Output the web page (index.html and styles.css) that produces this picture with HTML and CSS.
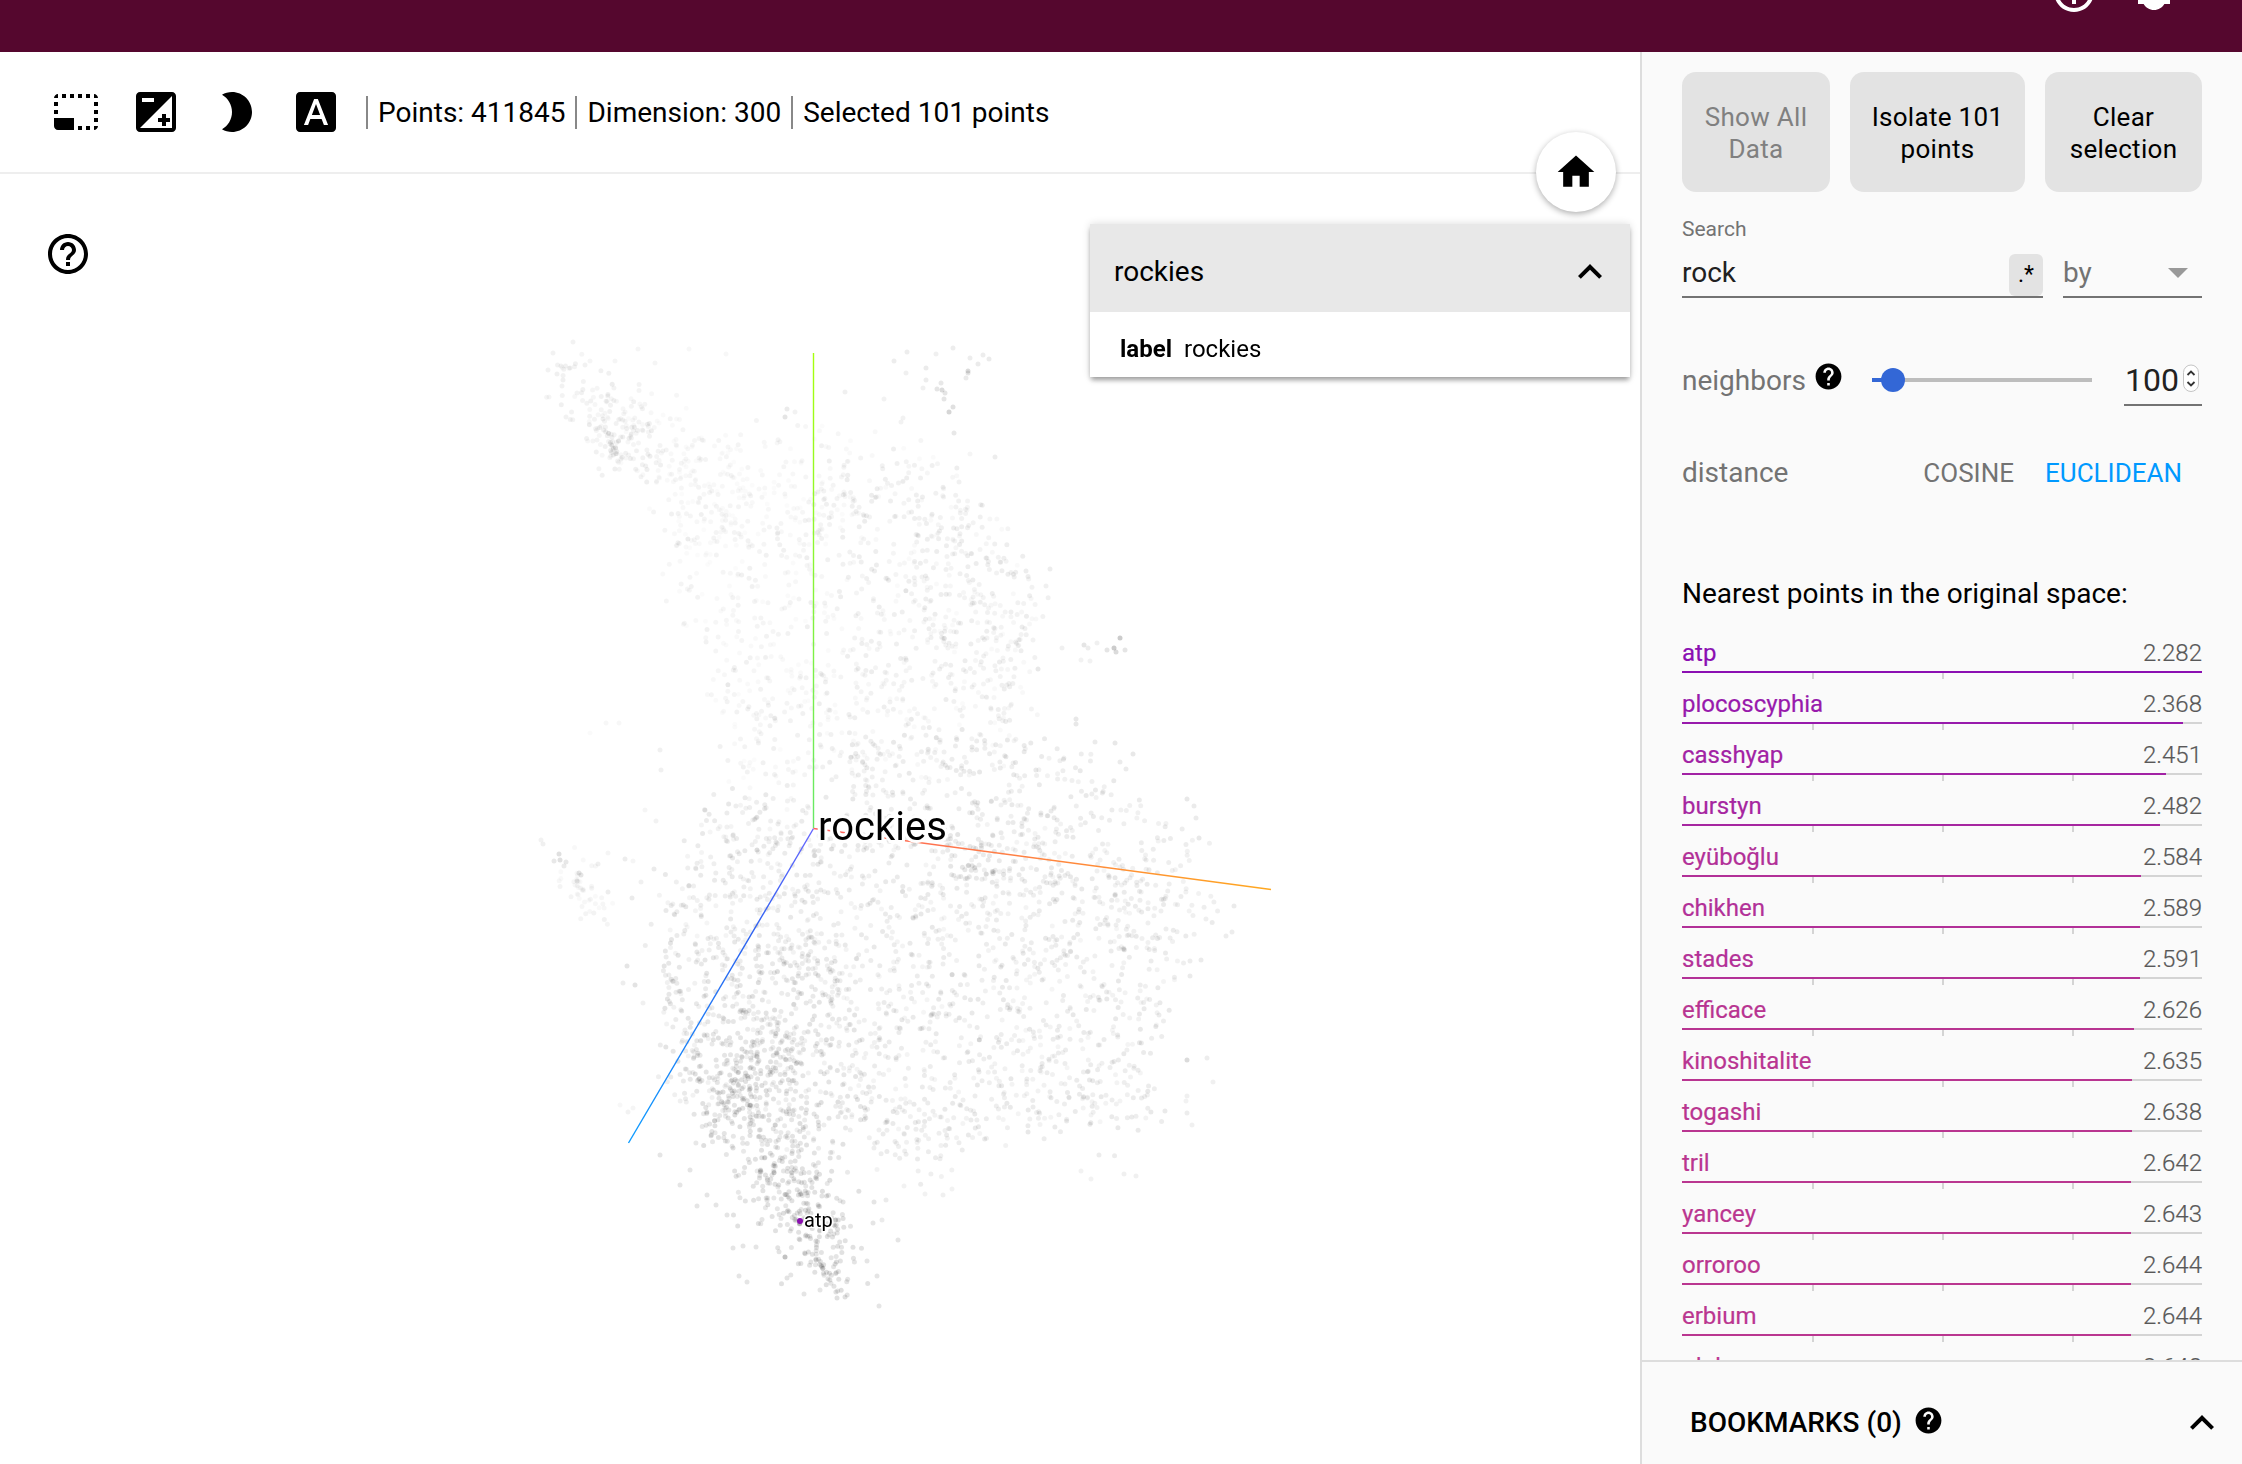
FILE: index.html
```html
<!DOCTYPE html>
<html lang="en">
<head>
<meta charset="utf-8">
<title>Embedding Projector</title>
<link rel="stylesheet" href="styles.css">
</head>
<body>
<svg class="defs" aria-hidden="true">
  <symbol id="help-outline" viewBox="0 0 24 24"><path d="M11 18h2v-2h-2v2zm1-16C6.48 2 2 6.48 2 12s4.48 10 10 10 10-4.48 10-10S17.52 2 12 2zm0 18c-4.41 0-8-3.59-8-8s3.59-8 8-8 8 3.59 8 8-3.59 8-8 8zm0-14c-2.21 0-4 1.79-4 4h2c0-1.1.9-2 2-2s2 .9 2 2c0 2-3 1.75-3 5h2c0-2.25 3-2.5 3-5 0-2.21-1.79-4-4-4z"/></symbol>
  <symbol id="help" viewBox="0 0 24 24"><path d="M12 2C6.48 2 2 6.48 2 12s4.48 10 10 10 10-4.48 10-10S17.52 2 12 2zm1 17h-2v-2h2v2zm2.07-7.75l-.9.92C13.45 12.9 13 13.5 13 15h-2v-.5c0-1.1.45-2.1 1.17-2.83l1.24-1.26c.37-.36.59-.86.59-1.41 0-1.1-.9-2-2-2s-2 .9-2 2H8c0-2.21 1.79-4 4-4s4 1.79 4 4c0 .88-.36 1.68-.93 2.25z"/></symbol>
  <symbol id="bug" viewBox="0 0 24 24"><path d="M20 8h-2.81c-.45-.78-1.07-1.45-1.82-1.96L17 4.41 15.59 3l-2.17 2.17C12.96 5.06 12.49 5 12 5s-.96.06-1.41.17L8.41 3 7 4.41l1.62 1.63C7.88 6.55 7.26 7.22 6.81 8H4v2h2.09c-.05.33-.09.66-.09 1v1H4v2h2v1c0 .34.04.67.09 1H4v2h2.81c1.04 1.79 2.97 3 5.19 3s4.15-1.21 5.19-3H20v-2h-2.09c.05-.33.09-.66.09-1v-1h2v-2h-2v-1c0-.34-.04-.67-.09-1H20V8zm-6 8h-4v-2h4v2zm0-4h-4v-2h4v2z"/></symbol>
  <symbol id="chevron" viewBox="0 0 24 24"><path d="M12 8l-6 6 1.41 1.41L12 10.83l4.59 4.58L18 14z"/></symbol>
</svg>

<header class="app-bar">
  <svg class="icon"><use href="#help-outline"/></svg>
  <svg class="icon"><use href="#bug"/></svg>
</header>

<div class="content">
  <main class="stage">
    <div class="toolbar">
      <svg class="icon" viewBox="0 0 24 24"><path d="M23 15h-2v2h2v-2zm0-4h-2v2h2v-2zm0 8h-2v2c1 0 2-1 2-2zM15 3h-2v2h2V3zm8 4h-2v2h2V7zm-2-4v2h2c0-1-1-2-2-2zM3 21h8v-6H1v4c0 1.100.9 2 2 2zM3 7H1v2h2V7zm12 12h-2v2h2v-2zm4-16h-2v2h2V3zm0 16h-2v2h2v-2zM3 3C2 3 1 4 1 5h2V3zm0 8H1v2h2v-2zm8-8H9v2h2V3zM7 3H5v2h2V3z"/></svg>
      <svg class="icon" viewBox="0 0 24 24"><path d="M15 17v2h2v-2h2v-2h-2v-2h-2v2h-2v2h2zm5-15H4c-1.100 0-2 .9-2 2v16c0 1.100.9 2 2 2h16c1.100 0 2-.9 2-2V4c0-1.100-.9-2-2-2zM5 5h6v2H5V5zm15 15H4L20 4v16z"/></svg>
      <svg class="icon" viewBox="0 0 24 24"><path d="M10 2c-1.820 0-3.530.5-5 1.350C7.990 5.080 10 8.300 10 12s-2.010 6.920-5 8.650C6.470 21.500 8.180 22 10 22c5.520 0 10-4.480 10-10S15.520 2 10 2z"/></svg>
      <svg class="icon" viewBox="0 0 24 24"><path d="M9.930 13.500h4.140L12 7.980zM20 2H4c-1.100 0-2 .9-2 2v16c0 1.100.9 2 2 2h16c1.100 0 2-.9 2-2V4c0-1.100-.9-2-2-2zm-4.050 16.500l-1.140-3H9.170l-1.120 3H5.960l5.110-13h1.860l5.110 13h-2.090z"/></svg>
      <div class="stats">
        <span class="stat">Points: 411845</span>
        <span class="stat">Dimension: 300</span>
        <span class="stat">Selected 101 points</span>
      </div>
    </div>
    <div class="scatter">
      <canvas class="cloud" id="cloud" width="1640" height="1290"></canvas>
      <svg class="axes" viewBox="0 174 1640 1290">
        <defs>
          <linearGradient id="gy" gradientUnits="userSpaceOnUse" x1="0" y1="353" x2="0" y2="829"><stop offset="0" stop-color="#a6ff0d"/><stop offset="1" stop-color="#66e866"/></linearGradient>
          <linearGradient id="gz" gradientUnits="userSpaceOnUse" x1="813" y1="829" x2="628" y2="1143"><stop offset="0" stop-color="#6666ff"/><stop offset=".35" stop-color="#2b62f0"/><stop offset="1" stop-color="#0c9cff"/></linearGradient>
          <linearGradient id="gx" gradientUnits="userSpaceOnUse" x1="813" y1="0" x2="1271" y2="0"><stop offset="0" stop-color="#ff6060"/><stop offset="1" stop-color="#ffa81f"/></linearGradient>
        </defs>
        <path d="M813.500 353V828" stroke="url(#gy)"/>
        <path d="M813.500 828.500L628.500 1143" stroke="url(#gz)"/>
        <path d="M813.500 828.500L1271 889.500" stroke="url(#gx)"/>
        <circle cx="800" cy="1221" r="3" fill="#8a0fb0"/>
        <text class="point-label point-label-main" x="818" y="839.500">rockies</text>
        <text class="point-label" x="804" y="1227">atp</text>
      </svg>
      <svg class="icon help-button"><use href="#help-outline"/></svg>
      <div class="home-button"><svg viewBox="0 0 24 24"><path d="M10 20v-6h4v6h5v-8h3L12 3 2 12h3v8z"/></svg></div>
      <section class="metadata">
        <div class="metadata-head"><span>rockies</span><svg class="icon"><use href="#chevron"/></svg></div>
        <div class="metadata-row"><b>label</b><span>rockies</span></div>
      </section>
    </div>
  </main>

  <aside class="inspector">
    <div class="panel">
      <div class="buttons">
        <button class="btn btn-show" disabled>Show All<br>Data</button>
        <button class="btn btn-isolate">Isolate 101<br>points</button>
        <button class="btn btn-clear">Clear<br>selection</button>
      </div>
      <div class="search-label">Search</div>
      <div class="search">
        <div class="field field-query"><span>rock</span><span class="regex">.*</span></div>
        <div class="field field-by"><span>by</span><i class="caret"></i></div>
      </div>
      <div class="neighbors">
        <span>neighbors</span>
        <svg class="icon-small"><use href="#help"/></svg>
        <div class="slider"><i class="knob"></i></div>
        <div class="number"><span>100</span><svg class="spinner" viewBox="0 0 16 30"><rect x=".5" y="1" width="15" height="26.500" rx="7.500"/><path d="M4.500 11L8 7.500l3.500 3.500M4.500 18L8 21.500l3.500-3.500"/></svg></div>
      </div>
      <div class="distance">
        <span>distance</span><span class="metric metric-cosine">COSINE</span><span class="metric metric-active">EUCLIDEAN</span>
      </div>
      <div class="list-title">Nearest points in the original space:</div>
      <div class="list" id="list"></div>
    </div>
    <footer class="bookmarks">
      <span>BOOKMARKS (0)</span>
      <svg class="icon-small"><use href="#help"/></svg>
      <svg class="icon"><use href="#chevron"/></svg>
    </footer>
  </aside>
</div>
<script src="main.js"></script>
</body>
</html>
```
FILE: styles.css
```css
* { box-sizing: border-box; }
body {
  margin: 0;
  width: 2242px;
  height: 1464px;
  overflow: hidden;
  display: flex;
  flex-direction: column;
  font: 28px/32px Roboto, sans-serif;
  color: #000;
  background: #fff;
}
.defs { position: absolute; width: 0; height: 0; }
.icon { width: 48px; height: 48px; flex: none; display: block; }
.icon-small { width: 31px; height: 31px; flex: none; display: block; }

.app-bar {
  height: 52px;
  flex: none;
  display: flex;
  justify-content: flex-end;
  align-items: flex-end;
  gap: 32px;
  padding: 0 64px 36px 0;
  overflow: hidden;
  background: #55072e;
  fill: #fff;
}
.content { flex: 1; min-height: 0; display: flex; }
.stage { width: 1640px; display: flex; flex-direction: column; }
.toolbar {
  height: 122px;
  flex: none;
  display: flex;
  align-items: center;
  gap: 32px;
  padding: 0 0 0 52px;
  border-bottom: 2px solid #eee;
}
.stats { display: flex; margin-left: -6px; }
.stat { border-left: 2px solid #888; padding: 0 10px; line-height: 33px; white-space: nowrap; }

.scatter { position: relative; flex: 1; }
.cloud, .axes { position: absolute; left: 0; top: 0; width: 1640px; height: 1290px; }
.axes path { fill: none; stroke-width: 1.4; }
.point-label { font-size: 20px; paint-order: stroke; stroke: #fff; stroke-width: 3px; }
.point-label-main { font-size: 40px; stroke-width: 6px; }
.help-button { position: absolute; left: 44px; top: 56px; }
.home-button {
  position: absolute;
  left: 1536px;
  top: -42px;
  width: 80px;
  height: 80px;
  border-radius: 50%;
  display: flex;
  align-items: center;
  justify-content: center;
  background: #fff;
  box-shadow: 0 2px 6px rgba(0, 0, 0, .32);
}
.home-button svg { width: 44px; height: 44px; }
.metadata {
  position: absolute;
  left: 1090px;
  top: 50px;
  width: 540px;
  background: #fff;
  box-shadow: 0 4px 5px -1px rgba(0, 0, 0, .35), 0 0 8px rgba(0, 0, 0, .14);
}
.metadata-head {
  height: 88px;
  display: flex;
  align-items: center;
  justify-content: space-between;
  padding: 8px 16px 0 24px;
  background: #e8e8e8;
}
.metadata-row { height: 65px; display: flex; gap: 12px; align-items: center; padding: 8px 30px 0; font-size: 24px; }

.inspector {
  flex: 1;
  min-width: 0;
  display: flex;
  flex-direction: column;
  border-left: 2px solid #ddd;
  background: #fafafa;
}
.panel { flex: 1; min-height: 0; overflow: hidden; padding: 20px 40px 0; }
.buttons { display: flex; gap: 20px; }
.btn {
  height: 120px;
  padding: 2px 0 0;
  border: 0;
  border-radius: 14px;
  background: #e3e3e3;
  color: #000;
  font: 26px/32px Roboto, sans-serif;
  letter-spacing: .3px;
}
.btn:disabled { color: #808080; }
.btn-show { width: 148px; }
.btn-isolate { width: 175px; }
.btn-clear { width: 157px; }
.search-label { margin-top: 23px; font-size: 21px; line-height: 28px; color: #737373; }
.search { display: flex; gap: 20px; margin-top: 11px; }
.field { height: 44px; display: flex; justify-content: space-between; border-bottom: 2px solid #737373; line-height: 37px; color: #212121; }
.field-query { width: 361px; }
.regex { width: 34px; height: 42px; border-radius: 6px; background: #e3e3e3; color: #000; font-size: 23px; line-height: 42px; text-align: center; }
.field-by { width: 139px; color: #737373; }
.caret { width: 20px; height: 10px; margin: 14px 14px 0 0; background: #999; clip-path: polygon(0 0, 100% 0, 50% 100%); }

.neighbors { height: 58px; display: flex; align-items: flex-start; margin-top: 50px; color: #737373; }
.neighbors > span { line-height: 65px; width: 131px; }
.neighbors .icon-small { margin-top: 13px; fill: #000; }
.slider { display: flow-root; width: 220px; height: 4px; margin: 30px 0 0 28px; background: linear-gradient(to right, #3367d6 20px, #bdbdbd 20px); }
.knob { display: block; width: 24px; height: 24px; margin: -10px 0 0 9px; border-radius: 50%; background: #3367d6; }
.number { width: 78px; height: 58px; margin-left: auto; display: flex; justify-content: space-between; padding: 0 3px 0 1px; border-bottom: 2px solid #737373; font-size: 32px; line-height: 64px; color: #212121; }
.spinner { width: 16px; height: 30px; margin-top: 16px; }
.spinner rect { fill: #fff; stroke: #c4c4c4; }
.spinner path { fill: none; stroke: #333; stroke-width: 1.8; }

.distance { display: flex; margin-top: 51px; color: #737373; }
.metric { font-size: 26px; }
.metric-cosine { margin-left: auto; margin-right: 31px; }
.metric-active { margin-right: 20px; color: #09f; }
.list-title { margin-top: 89px; }

.list { margin-top: 18px; font-size: 24px; }
.neighbor { height: 51px; }
.neighbor-text { height: 43px; padding-top: 11px; display: flex; justify-content: space-between; line-height: 28px; }
.neighbor-name { -webkit-text-stroke: .2px currentColor; }
.neighbor-value { color: #585858; font-weight: 300; -webkit-text-stroke: .2px currentColor; }
.track { height: 8px; background: linear-gradient(#d4d4d4, #d4d4d4) 0 0 / 100% 2px no-repeat; }
.bar { height: 2px; }
.ticks { display: grid; grid-template-columns: repeat(4, 1fr); height: 6px; }
.ticks i { border-right: 2px solid #d4d4d4; margin-right: -2px; }
.ticks i:last-child { border: 0; }

.bookmarks {
  height: 104px;
  flex: none;
  display: flex;
  align-items: center;
  padding: 20px 28px 0 48px;
  border-top: 2px solid #ddd;
  font-weight: 500;
}
.bookmarks .icon-small { margin: -5px 0 0 11px; }
.bookmarks .icon { margin-left: auto; margin-right: -12px; }
```
FILE: main.js
```js
// Nearest neighbours
const neighbors = [
  ['atp', 2.282, '#8b0fb2'], ['plocoscyphia', 2.368, '#981aac'],
  ['casshyap', 2.451, '#a222a4'], ['burstyn', 2.482, '#a626a0'],
  ['eyüboğlu', 2.584, '#b23098'], ['chikhen', 2.589, '#b23098'],
  ['stades', 2.591, '#b33197'], ['efficace', 2.626, '#b83491'],
  ['kinoshitalite', 2.635, '#b93591'], ['togashi', 2.638, '#b93590'],
  ['tril', 2.642, '#ba3690'], ['yancey', 2.643, '#ba3690'],
  ['orroroo', 2.644, '#ba3690'], ['erbium', 2.644, '#ba3690'],
  ['olok', 2.648, '#bb378f']
];
document.getElementById('list').innerHTML = neighbors.map(([name, d, color]) => `
  <div class="neighbor">
    <div class="neighbor-text"><span class="neighbor-name" style="color:${color}">${name}</span><span class="neighbor-value">${d.toFixed(3)}</span></div>
    <div class="track"><div class="bar" style="width:${(2.282 / d * 100).toFixed(2)}%;background:${color}"></div><div class="ticks"><i></i><i></i><i></i><i></i></div></div>
  </div>`).join('');

// Point cloud, in window coordinates
const ctx = document.getElementById('cloud').getContext('2d');
ctx.translate(0, -174);
let seed = 7;
const rnd = () => {
  seed = (seed + 0x6D2B79F5) | 0;
  let t = Math.imul(seed ^ (seed >>> 15), 1 | seed);
  t = (t + Math.imul(t ^ (t >>> 7), 61 | t)) ^ t;
  return ((t ^ (t >>> 14)) >>> 0) / 4294967296;
};
const gauss = () => Math.max(-2.2, Math.min(2.2, Math.sqrt(-2 * Math.log(1 - rnd())) * Math.cos(2 * Math.PI * rnd())));
const dot = (x, y, a) => {
  ctx.fillStyle = `rgba(0,0,0,${a})`;
  ctx.beginPath();
  ctx.arc(x, y, 2.5, 0, 2 * Math.PI);
  ctx.fill();
};
const inside = (poly, x, y) => {
  let hit = false;
  for (let i = 0, j = poly.length - 1; i < poly.length; j = i++) {
    const [xi, yi] = poly[i], [xj, yj] = poly[j];
    if ((yi > y) !== (yj > y) && x < (xj - xi) * (y - yi) / (yj - yi) + xi) hit = !hit;
  }
  return hit;
};
const area = (n, lo, hi, poly) => {
  const xs = poly.map(p => p[0]), ys = poly.map(p => p[1]);
  const x0 = Math.min(...xs), x1 = Math.max(...xs), y0 = Math.min(...ys), y1 = Math.max(...ys);
  for (let k = 0; k < n;) {
    const x = x0 + rnd() * (x1 - x0), y = y0 + rnd() * (y1 - y0);
    if (!inside(poly, x, y)) continue;
    dot(x + gauss() * 11, y + gauss() * 11, lo + rnd() * (hi - lo));
    k++;
  }
};
// Elongated blob scattered around the segment (x0,y0)-(x1,y1)
const streak = (n, lo, hi, x0, y0, x1, y1, s) => {
  for (let k = 0; k < n; k++) {
    const t = rnd();
    dot(x0 + (x1 - x0) * t + gauss() * s, y0 + (y1 - y0) * t + gauss() * s, lo + rnd() * (hi - lo));
  }
};
streak(70, .03, .055, 575, 380, 640, 420, 17);
streak(85, .03, .07, 590, 415, 655, 465, 14);
streak(20, .04, .07, 608, 438, 616, 452, 5);
streak(95, .015, .045, 640, 430, 730, 500, 26);
area(170, .015, .045, [[660, 440], [840, 430], [860, 520], [740, 560], [670, 520]]);
area(330, .015, .055, [[660, 520], [830, 500], [815, 820], [740, 790], [690, 640]]);
area(600, .02, .07, [[815, 450], [900, 440], [990, 490], [1010, 560], [1040, 620], [1025, 760], [815, 790]]);
area(150, .03, .07, [[900, 500], [990, 520], [1040, 620], [1020, 700], [920, 640]]);
area(260, .05, .09, [[850, 740], [1030, 740], [1120, 790], [1080, 850], [840, 850]]);
area(1080, .04, .09, [[815, 840], [1060, 830], [1150, 880], [1170, 960], [1155, 1060], [1150, 1130], [1060, 1145], [960, 1140], [880, 1120], [815, 1000]]);
area(120, .05, .08, [[1080, 780], [1140, 800], [1200, 840], [1215, 890], [1210, 930], [1160, 990], [1100, 900]]);
area(300, .04, .09, [[710, 800], [815, 800], [830, 950], [720, 960], [660, 930]]);
area(580, .05, .11, [[660, 950], [830, 940], [870, 1120], [810, 1150], [690, 1120], [665, 1030]]);
area(55, .05, .08, [[890, 1110], [980, 1120], [940, 1170], [870, 1170]]);
streak(165, .08, .13, 740, 1060, 785, 1120, 32);
streak(45, .1, .13, 760, 1065, 728, 1110, 13);
streak(165, .09, .12, 745, 1130, 810, 1210, 25);
streak(75, .1, .13, 800, 1190, 840, 1265, 14);
streak(60, .1, .12, 770, 1210, 845, 1255, 22);
streak(22, .1, .13, 825, 1260, 838, 1290, 6);
streak(24, .02, .04, 575, 860, 600, 920, 9);
streak(40, .08, .11, 955, 835, 985, 875, 13);
streak(20, .03, .05, 575, 885, 590, 915, 8);
// Stragglers: x, y, opacity
[
  [907, 352, .07], [894, 361, .07], [936, 354, .06], [953, 348, .07], [970, 358, .07], [983, 355, .07],
  [989, 359, .08], [978, 364, .08], [926, 368, .08], [906, 373, .06], [968, 371, .14], [968, 373, .1], [966, 378, .08],
  [926, 380, .07], [941, 383, .09], [923, 388, .06], [937, 389, .1], [942, 390, .14], [945, 393, .1],
  [944, 399, .1], [953, 407, .12], [949, 412, .16], [954, 433, .09], [903, 418, .05], [901, 422, .05],
  [845, 392, .06], [884, 399, .05], [995, 457, .07], [970, 454, .04], [573, 342, .05], [553, 353, .05], [638, 349, .04],
  [689, 349, .03], [726, 354, .03], [655, 363, .04], [548, 370, .05], [549, 397, .04], [787, 409, .08], [785, 417, .1], [795, 412, .05],
  [557, 374, .06], [563, 380, .06], [570, 368, .06], [562, 386, .05], [585, 365, .05], [566, 417, .05], [590, 361, .04], [615, 361, .04],
  [1033, 640, .05], [1062, 648, .06], [1084, 645, .1], [1088, 648, .07], [1097, 643, .06], [1120, 638, .2],
  [1107, 650, .1], [1114, 648, .2], [1116, 652, .14], [1125, 650, .1], [1081, 660, .05], [1090, 661, .05],
  [1038, 669, .09], [1026, 571, .07], [1050, 569, .07], [1046, 586, .06], [1076, 719, .09], [1076, 724, .09],
  [1095, 742, .08], [1115, 743, .09], [1133, 754, .09], [1120, 762, .08], [1126, 769, .08], [1187, 799, .09],
  [1194, 806, .08], [1196, 818, .08], [1199, 838, .09], [1234, 906, .08], [1232, 932, .07], [1226, 936, .07],
  [1201, 960, .08], [1190, 961, .07], [1190, 976, .08], [1207, 1058, .07], [1187, 1060, .14], [1213, 1082, .06],
  [1187, 1096, .06], [1186, 1101, .05], [1187, 1113, .07], [1192, 1125, .06], [1136, 1176, .06], [1124, 1174, .06],
  [1091, 1179, .05], [1081, 1171, .05], [541, 840, .05], [543, 844, .06], [559, 854, .12], [554, 861, .09], [560, 860, .12],
  [566, 862, .09], [564, 866, .08], [579, 873, .1], [581, 875, .1], [577, 881, .09], [608, 853, .04], [598, 864, .06],
  [625, 859, .07], [654, 869, .08], [641, 882, .06], [645, 810, .04], [656, 821, .05], [608, 892, .07], [632, 898, .08],
  [633, 861, .04], [590, 733, .02], [606, 723, .03], [619, 723, .03], [660, 750, .06], [661, 770, .06],
  [623, 983, .07], [627, 966, .1], [635, 985, .11], [643, 1003, .06], [620, 1105, .03], [628, 1112, .05], [633, 1108, .04],
  [660, 1155, .1], [690, 1170, .1], [680, 1185, .1], [697, 1206, .1], [707, 1195, .1], [716, 1205, .1], [727, 1215, .1],
  [733, 1248, .1], [743, 1246, .1], [756, 1247, .1], [739, 1276, .1], [747, 1282, .1], [787, 1278, .11], [804, 1294, .1],
  [820, 1290, .1], [898, 1240, .1], [877, 1276, .1], [867, 1261, .1], [873, 1223, .1], [882, 1220, .08], [879, 1306, .1],
  [874, 1202, .1], [886, 1200, .08], [925, 1194, .05], [943, 1195, .06], [952, 1189, .05], [904, 1186, .05], [785, 1257, .24],
  [837, 1298, .12], [845, 1297, .12]
].forEach(p => dot(...p));
```
